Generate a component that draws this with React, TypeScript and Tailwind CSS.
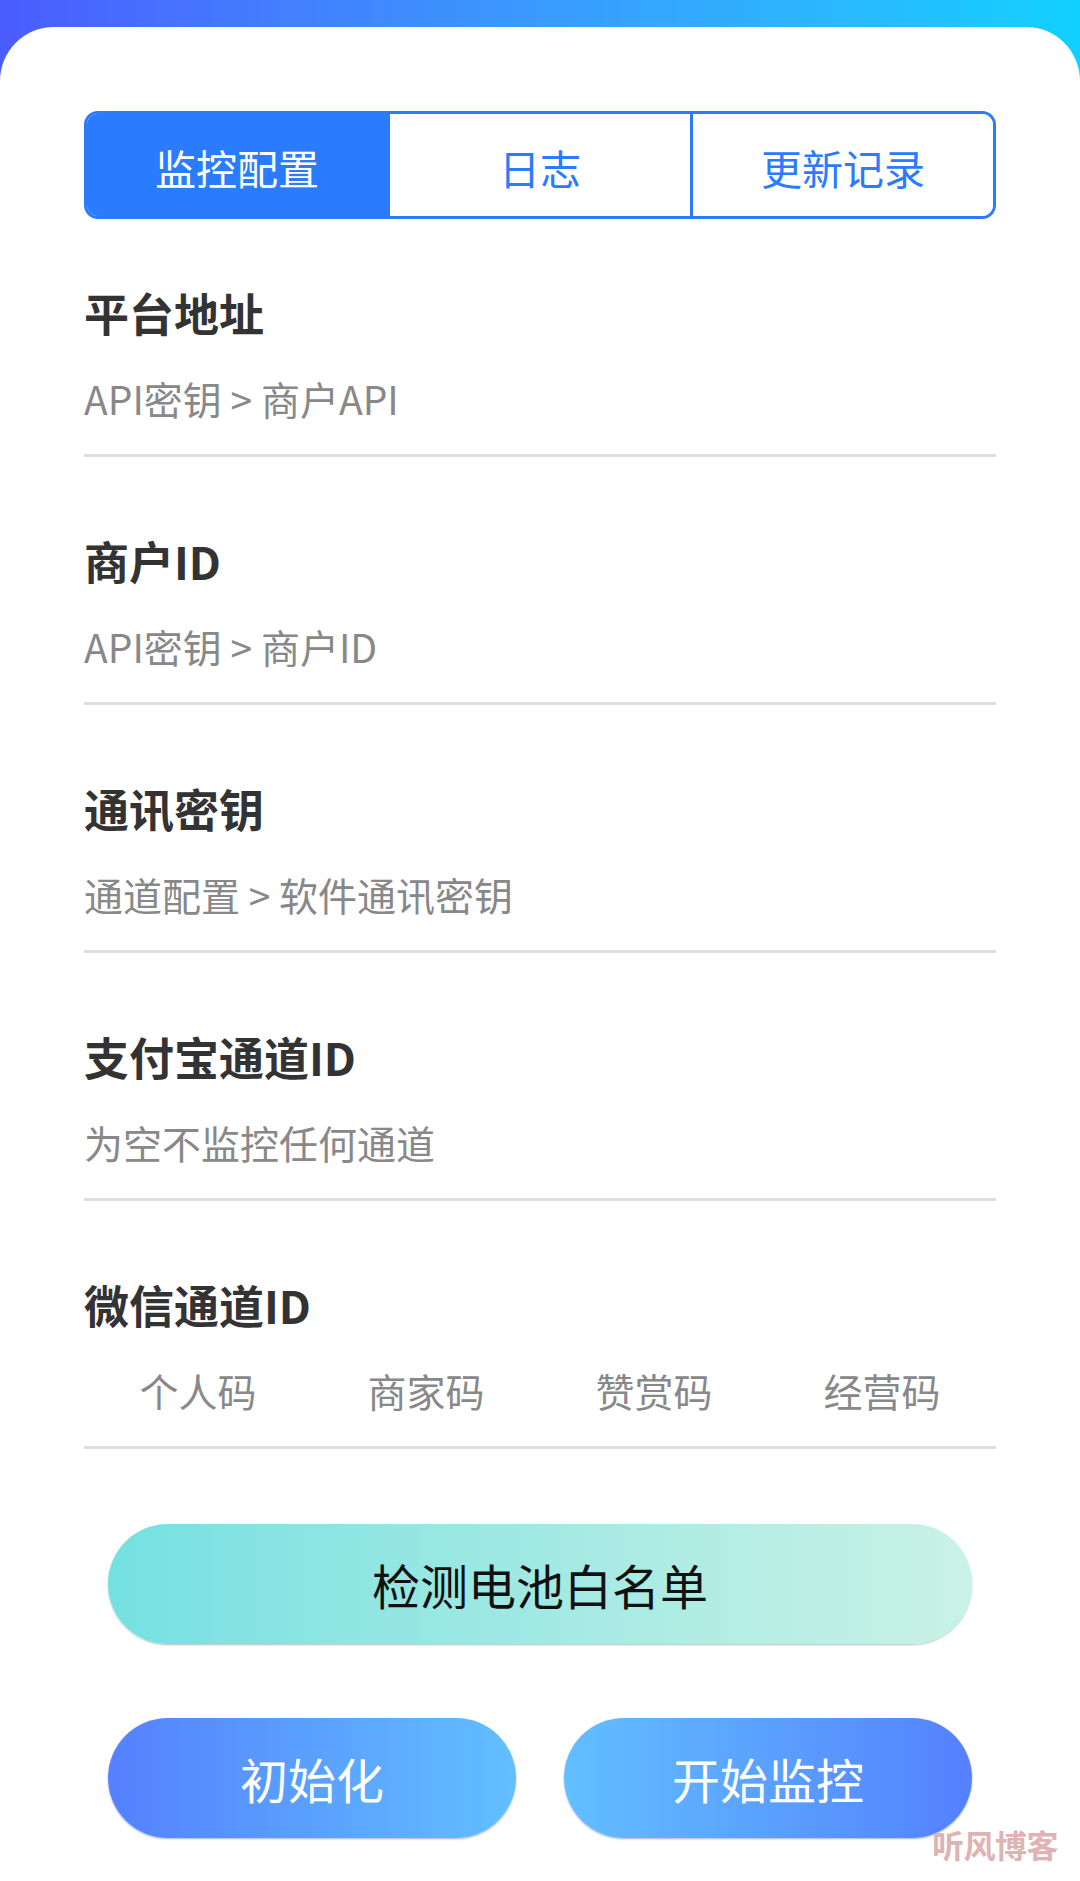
import { useState } from "react";

const FONT = "font-['Noto_Sans_CJK_SC','Noto_Sans',sans-serif]";

const tabs = ["监控配置", "日志", "更新记录"];

const fields = [
  { title: "平台地址", hint: "API密钥 > 商户API" },
  { title: "商户ID", hint: "API密钥 > 商户ID" },
  { title: "通讯密钥", hint: "通道配置 > 软件通讯密钥" },
  { title: "支付宝通道ID", hint: "为空不监控任何通道" },
];

const wechatTypes = ["个人码", "商家码", "赞赏码", "经营码"];

function Field({ title, children }: { title: string; children: React.ReactNode }) {
  return (
    <div className="flex flex-col">
      <div className="h-[60px] pb-[5px] flex items-center text-[45px] font-bold text-[#333333] leading-none">{title}</div>
      <div className="mt-[28px] h-[56px] pb-[5px] flex items-center">{children}</div>
      <div className="mt-[25px] h-[3px] bg-[#dddddd]" />
    </div>
  );
}

export default function App() {
  const [active, setActive] = useState(0);

  return (
    <div className={`relative w-[1080px] h-[1881px] overflow-hidden bg-gradient-to-r from-[#4a5cff] to-[#0fd0ff] ${FONT}`}>
      <div className="h-[27px]" />
      <div className="h-[1854px] bg-white rounded-t-[54px] px-[84px] pt-[84px]">
        {/* Tabs */}
        <div className="flex h-[108px] border-[3px] border-[#2b7bff] rounded-[14px] overflow-hidden">
          {tabs.map((t, i) => (
            <button
              key={t}
              onClick={() => setActive(i)}
              className={`flex-1 flex items-center justify-center pt-[4px] text-[41px] leading-none ${
                i > 0 ? "border-l-[3px] border-[#2b7bff]" : ""
              } ${active === i ? "bg-[#2b7bff] text-white" : "bg-white text-[#2b7bff]"}`}
            >
              {t}
            </button>
          ))}
        </div>

        {/* Fields */}
        <div className="mt-[66px] flex flex-col gap-[76px]">
          {fields.map((f) => (
            <Field key={f.title} title={f.title}>
              <span className="text-[39px] text-[#888888] leading-none">{f.hint}</span>
            </Field>
          ))}
          <Field title="微信通道ID">
            <div className="grid grid-cols-4 w-full">
              {wechatTypes.map((w) => (
                <span key={w} className="text-center text-[39px] text-[#888888] leading-none">
                  {w}
                </span>
              ))}
            </div>
          </Field>
        </div>

        {/* Buttons */}
        <div className="mt-[75px] px-[24px] flex flex-col gap-[74px]">
          <button className="h-[120px] rounded-full bg-gradient-to-r from-[#74e0e1] to-[#c9f2e5] shadow-[0_1px_2px_rgba(0,80,80,0.35)] text-[48px] text-[#111111] leading-none">
            检测电池白名单
          </button>
          <div className="flex gap-[48px]">
            <button className="flex-1 h-[120px] rounded-full bg-gradient-to-r from-[#5580ff] to-[#62bfff] shadow-[0_1px_2px_rgba(30,60,160,0.4)] text-[48px] text-white leading-none">
              初始化
            </button>
            <button className="flex-1 h-[120px] rounded-full bg-gradient-to-r from-[#62bfff] to-[#5580ff] shadow-[0_1px_2px_rgba(30,60,160,0.4)] text-[48px] text-white leading-none">
              开始监控
            </button>
          </div>
        </div>
      </div>

      {/* Watermark */}
      <div className="absolute left-[932px] top-[1828px] text-[32px] font-bold text-[#ddb3b3] leading-none tracking-[-0.5px]">
        听风博客
      </div>
    </div>
  );
}
